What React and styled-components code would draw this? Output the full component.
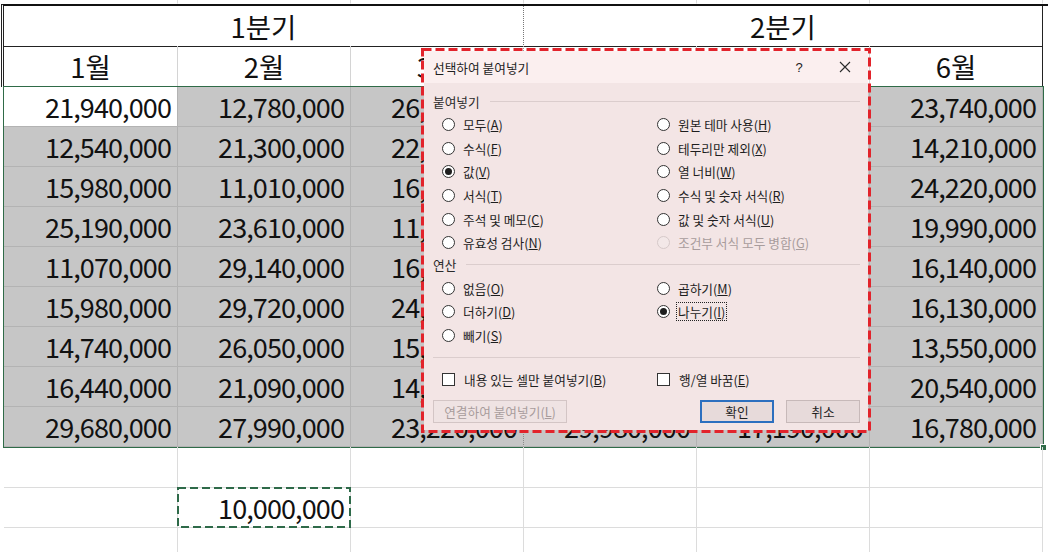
import React from 'react';
import styled, { createGlobalStyle } from 'styled-components';

const GlobalStyle = createGlobalStyle`
  html, body { margin: 0; padding: 0; background: #fff; }
  body {
    width: 1048px; height: 552px; overflow: hidden;
    font-family: "Noto Sans CJK KR", "Noto Sans", sans-serif;
    color: #111;
  }
`;

const COLS = '174px repeat(5, 173px)';

const Page = styled.div`
  position: relative;
  width: 1048px;
  height: 552px;
  overflow: hidden;
  padding-left: 4px;
  box-sizing: border-box;
`;

const Row = styled.div`
  display: grid;
  grid-template-columns: ${COLS};
  height: ${(p) => p.$h}px;
  box-sizing: border-box;
`;

const HeaderRow = styled(Row)`
  margin-left: -3px;
  border-left: 3px double #222;
  border-top: ${(p) => (p.$top ? '2px solid #111' : 'none')};
`;

const Cell = styled.div`
  box-sizing: border-box;
  display: flex;
  align-items: center;
  justify-content: flex-end;
  padding-right: 6px;
  border-right: 1px ${(p) => p.$rs || 'solid'} ${(p) => p.$rc || '#dcdcdc'};
  border-bottom: 1px solid ${(p) => p.$bc || '#dcdcdc'};
  background: ${(p) => p.$bg || 'transparent'};
  font-size: 27px;
  letter-spacing: -0.9px;
  white-space: nowrap;
  position: relative;
`;

const HeadCell = styled(Cell)`
  justify-content: center;
  padding: 0;
  font-size: 27.5px;
  letter-spacing: 0;
  grid-column: span ${(p) => p.$span || 1};
`;

const Selection = styled.div`
  position: relative;
  outline: 2px solid #2f6b48;
  outline-offset: -1px;
  width: 1039px;
`;

const Handle = styled.div`
  position: absolute;
  right: -4px;
  bottom: -4px;
  width: 5px;
  height: 5px;
  background: #2f6b48;
  border: 1px solid #fff;
`;

const CopyMarquee = styled.svg`
  position: absolute;
  left: -2px;
  top: -2px;
  width: 176px;
  height: 43px;
  pointer-events: none;
  overflow: visible;
`;

/* ---------- dialog ---------- */

const DialogFrame = styled.div`
  position: absolute;
  left: 421px;
  top: 48px;
  width: 450px;
  height: 385px;
  padding: 3px;
  box-sizing: border-box;
  font-size: 12.7px;
  color: #1e1e1e;
`;

const RedOutline = styled.svg`
  position: absolute;
  left: 0;
  top: 0;
  width: 450px;
  height: 385px;
  pointer-events: none;
`;

const Panel = styled.div`
  height: 100%;
  display: flex;
  flex-direction: column;
  background: #f3e5e5;
`;

const TitleBar = styled.div`
  height: 32px;
  flex: none;
  display: flex;
  align-items: center;
  background: #fbefef;
  padding-left: 9px;
`;

const Title = styled.div`
  flex: 1;
`;

const TitleButton = styled.div`
  width: 46px;
  height: 32px;
  display: flex;
  align-items: center;
  justify-content: center;
  font-family: "Liberation Sans", sans-serif;
  font-size: 13px;
  color: #222;
`;

const Body = styled.div`
  flex: 1;
  display: flex;
  flex-direction: column;
  padding: 0 8px 0 9px;
`;

const GroupHeader = styled.div`
  display: flex;
  align-items: center;
  gap: 10px;
  height: 18px;
  margin-top: ${(p) => p.$mt}px;
  color: #2a2a2a;
  &::after {
    content: '';
    flex: 1;
    height: 1px;
    background: #dbcdcd;
  }
`;

const OptionGrid = styled.div`
  display: grid;
  grid-template-columns: 215px 1fr;
  grid-auto-rows: 23.6px;
  padding-left: 9px;
  margin-top: 3px;
`;

const Option = styled.div`
  display: flex;
  align-items: center;
  gap: 7px;
  color: ${(p) => (p.$disabled ? '#a89c9c' : '#1e1e1e')};
`;

const Radio = styled.span`
  width: 13px;
  height: 13px;
  box-sizing: border-box;
  border-radius: 50%;
  border: 1px solid ${(p) => (p.$disabled ? '#d6c9c9' : '#333')};
  background: ${(p) => (p.$disabled ? '#f3e8e8' : '#fff')};
  display: flex;
  align-items: center;
  justify-content: center;
  flex: none;
  &::after {
    content: '';
    width: 7px;
    height: 7px;
    border-radius: 50%;
    background: ${(p) => (p.$checked ? '#1e1e1e' : 'transparent')};
  }
`;

const Label = styled.span`
  padding: 0 1px;
  line-height: 17px;
  outline: ${(p) => (p.$focus ? '1px dotted #222' : 'none')};
  outline-offset: 0;
`;

const Separator = styled.div`
  height: 1px;
  background: #dbcdcd;
  margin-top: 10px;
`;

const CheckRow = styled.div`
  display: grid;
  grid-template-columns: 215px 1fr;
  height: 22px;
  margin-top: 10px;
  padding-left: 9px;
`;

const CheckOption = styled.div`
  display: flex;
  align-items: center;
  gap: 8px;
`;

const Box = styled.span`
  width: 13px;
  height: 13px;
  box-sizing: border-box;
  border: 1px solid #333;
  background: #fff;
  flex: none;
`;

const ButtonRow = styled.div`
  display: flex;
  align-items: center;
  margin-top: 10px;
  gap: 12px;
`;

const Button = styled.div`
  height: 23px;
  width: ${(p) => p.$w}px;
  box-sizing: border-box;
  display: flex;
  align-items: center;
  justify-content: center;
  background: ${(p) => (p.$disabled ? '#efe3e3' : '#e7dada')};
  border: ${(p) =>
    p.$primary ? '2px solid #2c6fbf' : `1px solid ${p.$disabled ? '#d3c5c5' : '#c7b9b9'}`};
  color: ${(p) => (p.$disabled ? '#a89c9c' : '#1e1e1e')};
  margin-right: ${(p) => (p.$push ? 'auto' : '0')};
`;

/* ---------- data ---------- */

const data = [
  ['21,940,000', '12,780,000', '26,310,000', '18,420,000', '22,610,000', '23,740,000'],
  ['12,540,000', '21,300,000', '22,150,000', '27,330,000', '13,870,000', '14,210,000'],
  ['15,980,000', '11,010,000', '16,470,000', '19,260,000', '25,040,000', '24,220,000'],
  ['25,190,000', '23,610,000', '11,830,000', '24,580,000', '18,990,000', '19,990,000'],
  ['11,070,000', '29,140,000', '16,920,000', '12,760,000', '27,450,000', '16,140,000'],
  ['15,980,000', '29,720,000', '24,380,000', '21,640,000', '14,320,000', '16,130,000'],
  ['14,740,000', '26,050,000', '15,660,000', '28,110,000', '20,870,000', '13,550,000'],
  ['16,440,000', '21,090,000', '14,520,000', '17,930,000', '23,180,000', '20,540,000'],
  ['29,680,000', '27,990,000', '23,220,000', '29,980,000', '17,190,000', '16,780,000'],
];

const months = ['1월', '2월', '3월', '4월', '5월', '6월'];

const pasteOptions = [
  { t: '모두', k: 'A' },
  { t: '원본 테마 사용', k: 'H' },
  { t: '수식', k: 'F' },
  { t: '테두리만 제외', k: 'X' },
  { t: '값', k: 'V', checked: true },
  { t: '열 너비', k: 'W' },
  { t: '서식', k: 'T' },
  { t: '수식 및 숫자 서식', k: 'R' },
  { t: '주석 및 메모', k: 'C' },
  { t: '값 및 숫자 서식', k: 'U' },
  { t: '유효성 검사', k: 'N' },
  { t: '조건부 서식 모두 병합', k: 'G', disabled: true },
];

const opOptions = [
  { t: '없음', k: 'O' },
  { t: '곱하기', k: 'M' },
  { t: '더하기', k: 'D' },
  { t: '나누기', k: 'I', checked: true, focus: true },
  { t: '빼기', k: 'S' },
];

const Key = ({ t, k }) => (
  <>
    {t}(<u>{k}</u>)
  </>
);

const RadioOption = ({ o }) => (
  <Option $disabled={o.disabled}>
    <Radio $checked={o.checked} $disabled={o.disabled} />
    <Label $focus={o.focus}>
      <Key t={o.t} k={o.k} />
    </Label>
  </Option>
);

const PlainRow = ({ h, children }) => (
  <Row $h={h}>
    {Array.from({ length: 6 }).map((_, i) =>
      children && children[i] ? (
        <React.Fragment key={i}>{children[i]}</React.Fragment>
      ) : (
        <Cell key={i} $bc={h < 10 ? 'transparent' : '#dcdcdc'} />
      )
    )}
  </Row>
);

export default function App() {
  return (
    <>
      <GlobalStyle />
      <Page>
        <PlainRow h={4} />
        <HeaderRow $h={42} $top>
          <HeadCell $span={3} $rs="dotted" $rc="#777" $bc="#222">1분기</HeadCell>
          <HeadCell $span={3} $rc="#222" $bc="#222">2분기</HeadCell>
        </HeaderRow>
        <HeaderRow $h={41}>
          {months.map((m, i) => (
            <HeadCell
              key={m}
              $rc={i === 5 ? '#222' : i === 2 ? '#999' : '#d4d4d4'}
              $rs={i === 2 ? 'dotted' : 'solid'}
              $bc="#222"
            >
              {m}
            </HeadCell>
          ))}
        </HeaderRow>
        <Selection>
          {data.map((row, r) => (
            <Row key={r} $h={40}>
              {row.map((v, c) => (
                <Cell
                  key={c}
                  $bg={r === 0 && c === 0 ? '#fff' : '#c6c6c6'}
                  $rc={c === 2 ? '#8a8a8a' : '#b3b3b3'}
                  $rs={c === 2 ? 'dotted' : 'solid'}
                  $bc="#b3b3b3"
                >
                  {v}
                </Cell>
              ))}
            </Row>
          ))}
          <Handle />
        </Selection>
        <PlainRow h={41} />
        <PlainRow h={40}>
          {[
            null,
            <Cell key="copy">
              10,000,000
              <CopyMarquee viewBox="0 0 176 43">
                <rect x="2" y="2" width="172" height="39" fill="none" stroke="#2e6a49" strokeWidth="2" strokeDasharray="8 4" />
              </CopyMarquee>
            </Cell>,
          ]}
        </PlainRow>
        <PlainRow h={40} />

        <DialogFrame>
          <Panel>
            <TitleBar>
              <Title>선택하여 붙여넣기</Title>
              <TitleButton>?</TitleButton>
              <TitleButton>
                <svg width="12" height="12" viewBox="0 0 12 12">
                  <path d="M1 1 L11 11 M11 1 L1 11" stroke="#2a2a2a" strokeWidth="1.1" fill="none" />
                </svg>
              </TitleButton>
            </TitleBar>
            <Body>
              <GroupHeader $mt={9}>붙여넣기</GroupHeader>
              <OptionGrid>
                {pasteOptions.map((o) => (
                  <RadioOption key={o.k} o={o} />
                ))}
              </OptionGrid>
              <GroupHeader $mt={1}>연산</GroupHeader>
              <OptionGrid>
                {opOptions.map((o) => (
                  <RadioOption key={o.k} o={o} />
                ))}
              </OptionGrid>
              <Separator />
              <CheckRow>
                <CheckOption>
                  <Box />
                  <Label>
                    <Key t="내용 있는 셀만 붙여넣기" k="B" />
                  </Label>
                </CheckOption>
                <CheckOption>
                  <Box />
                  <Label>
                    <Key t="행/열 바꿈" k="E" />
                  </Label>
                </CheckOption>
              </CheckRow>
              <ButtonRow>
                <Button $w={134} $disabled $push>
                  <Key t="연결하여 붙여넣기" k="L" />
                </Button>
                <Button $w={74} $primary>확인</Button>
                <Button $w={74}>취소</Button>
              </ButtonRow>
            </Body>
          </Panel>
          <RedOutline viewBox="0 0 450 385">
            <rect x="1.5" y="1.5" width="447" height="382" fill="none" stroke="#e2232b" strokeWidth="3" strokeDasharray="9 4" />
          </RedOutline>
        </DialogFrame>
      </Page>
    </>
  );
}
